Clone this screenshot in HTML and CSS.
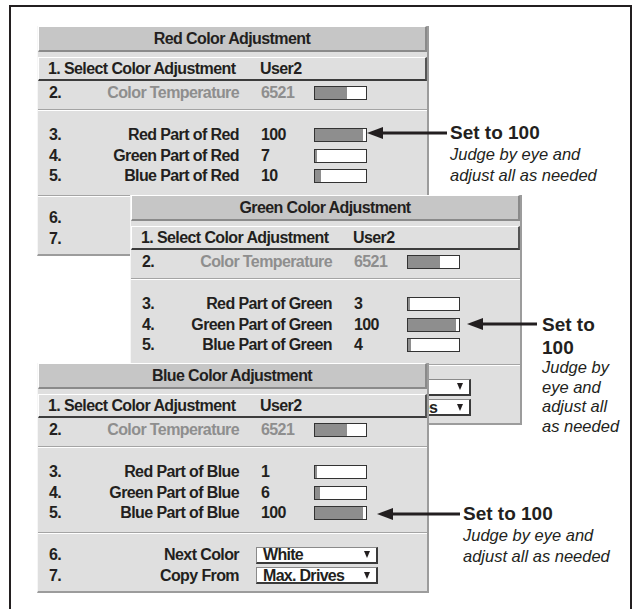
FILE: index.html
```html
<!DOCTYPE html>
<html lang="en">
<head>
  <meta charset="UTF-8">
  <title>Color Adjustment</title>
  <link rel="stylesheet" href="styles.css">
</head>
<body>

  <div class="figure">

    <section class="panel panel-red">
      <div class="panel-title">Red Color Adjustment</div>
      <div class="group group-top">
        <div class="row row-select"><span class="wide">1. Select Color Adjustment</span><span class="val">User2</span></div>
        <div class="row row-dim"><span class="num">2.</span><span class="label">Color Temperature</span><span class="val">6521</span><span class="bar"><span class="fill" style="width: 62%"></span></span></div>
      </div>
      <div class="group group-parts">
        <div class="row"><span class="num">3.</span><span class="label">Red Part of Red</span><span class="val">100</span><span class="bar"><span class="fill" style="width: 94%"></span></span></div>
        <div class="row"><span class="num">4.</span><span class="label">Green Part of Red</span><span class="val">7</span><span class="bar"><span class="fill" style="width: 4%"></span></span></div>
        <div class="row"><span class="num">5.</span><span class="label">Blue Part of Red</span><span class="val">10</span><span class="bar"><span class="fill" style="width: 12%"></span></span></div>
      </div>
      <div class="group group-actions">
        <div class="row"><span class="num">6.</span><span class="label">Next Color</span><span class="select">Green<i class="caret"></i></span></div>
        <div class="row"><span class="num">7.</span><span class="label">Copy From</span><span class="select">Max. Drives<i class="caret"></i></span></div>
      </div>
    </section>

    <section class="panel panel-green">
      <div class="panel-title">Green Color Adjustment</div>
      <div class="group group-top">
        <div class="row row-select"><span class="wide">1. Select Color Adjustment</span><span class="val">User2</span></div>
        <div class="row row-dim"><span class="num">2.</span><span class="label">Color Temperature</span><span class="val">6521</span><span class="bar"><span class="fill" style="width: 62%"></span></span></div>
      </div>
      <div class="group group-parts">
        <div class="row"><span class="num">3.</span><span class="label">Red Part of Green</span><span class="val">3</span><span class="bar"><span class="fill" style="width: 4%"></span></span></div>
        <div class="row"><span class="num">4.</span><span class="label">Green Part of Green</span><span class="val">100</span><span class="bar"><span class="fill" style="width: 94%"></span></span></div>
        <div class="row"><span class="num">5.</span><span class="label">Blue Part of Green</span><span class="val">4</span><span class="bar"><span class="fill" style="width: 5%"></span></span></div>
      </div>
      <div class="group group-actions">
        <div class="row"><span class="num">6.</span><span class="label">Next Color</span><span class="select">Blue<i class="caret"></i></span></div>
        <div class="row"><span class="num">7.</span><span class="label">Copy From</span><span class="select">Max. Drives<i class="caret"></i></span></div>
      </div>
    </section>

    <section class="panel panel-blue">
      <div class="panel-title">Blue Color Adjustment</div>
      <div class="group group-top">
        <div class="row row-select"><span class="wide">1. Select Color Adjustment</span><span class="val">User2</span></div>
        <div class="row row-dim"><span class="num">2.</span><span class="label">Color Temperature</span><span class="val">6521</span><span class="bar"><span class="fill" style="width: 62%"></span></span></div>
      </div>
      <div class="group group-parts">
        <div class="row"><span class="num">3.</span><span class="label">Red Part of Blue</span><span class="val">1</span><span class="bar"><span class="fill" style="width: 3%"></span></span></div>
        <div class="row"><span class="num">4.</span><span class="label">Green Part of Blue</span><span class="val">6</span><span class="bar"><span class="fill" style="width: 10%"></span></span></div>
        <div class="row"><span class="num">5.</span><span class="label">Blue Part of Blue</span><span class="val">100</span><span class="bar"><span class="fill" style="width: 94%"></span></span></div>
      </div>
      <div class="group group-actions">
        <div class="row"><span class="num">6.</span><span class="label">Next Color</span><span class="select">White<i class="caret"></i></span></div>
        <div class="row"><span class="num">7.</span><span class="label">Copy From</span><span class="select">Max. Drives<i class="caret"></i></span></div>
      </div>
    </section>

    <!-- callouts -->
    <div class="callout callout-red">
      <svg class="arrow" width="80" height="22" viewBox="0 0 80 22"><path d="M0 11 L16 5 L16 17 Z"/><rect x="15" y="9.5" width="65" height="3"/></svg>
      <div class="note"><b>Set to 100</b><i>Judge by eye and<br>adjust all as needed</i></div>
    </div>

    <div class="callout callout-green">
      <svg class="arrow" width="70" height="22" viewBox="0 0 70 22"><path d="M0 11 L16 5 L16 17 Z"/><rect x="15" y="9.5" width="55" height="3"/></svg>
      <div class="note note-narrow"><b>Set to 100</b><i>Judge by eye and adjust all as needed</i></div>
    </div>

    <div class="callout callout-blue">
      <svg class="arrow" width="83" height="22" viewBox="0 0 83 22"><path d="M0 11 L16 5 L16 17 Z"/><rect x="15" y="9.5" width="68" height="3"/></svg>
      <div class="note"><b>Set to 100</b><i>Judge by eye and<br>adjust all as needed</i></div>
    </div>

  </div>

</body>
</html>
```

FILE: styles.css
```css
body {
  margin: 0;
  background: #fff;
  color: #231f20;
  font-family: "Liberation Sans", Arial, sans-serif;
  overflow: hidden;
}

.figure {
  position: relative;
  margin: 5px 0 0 9px;
  width: 619px;
  height: 620px;
  border: 2px solid #231f20;
  border-bottom: none;
}

/* menu windows */
.panel {
  position: absolute;
  width: 392px;
  height: 230px;
  box-sizing: border-box;
  background: #dfdfdf;
  border-left: 1px solid #f6f6f6;
  border-right: 2px solid #9c9c9c;
  border-bottom: 2px solid #9c9c9c;
  font-size: 16px;
  font-weight: bold;
  letter-spacing: -0.6px;
  white-space: nowrap;
}

.panel-red { left: 26px; top: 19px; }
.panel-green { left: 119px; top: 188px; }
.panel-blue { left: 26px; top: 356px; }

.panel-title {
  height: 26px;
  box-sizing: border-box;
  background: #c6c6c6;
  border-top: 1px solid #fff;
  border-left: 1px solid #fff;
  border-right: 2px solid #8a8a8a;
  border-bottom: 2px solid #8a8a8a;
  text-align: center;
  line-height: 23px;
}

.group-top {
  height: 57px;
  padding-top: 5px;
  box-sizing: border-box;
}

.group-parts,
.group-actions {
  border-top: 1px solid #a4a4a4;
  box-shadow: inset 0 1px 0 #fff;
}

.group-parts {
  padding: 15px 0 8px;
}

.group-actions {
  padding-top: 12.5px;
}

.row {
  display: grid;
  grid-template-columns: 30px 160px 75px 53px;
  align-items: center;
  padding-left: 11px;
  height: 20.5px;
  line-height: 20px;
}

.group-top .row {
  height: 24px;
}

.row-select {
  box-sizing: border-box;
  padding-left: 9px;
  border-top: 1px solid #fff;
  border-left: 1px solid #fff;
  border-right: 2px solid #555;
  border-bottom: 2px solid #3c3c3c;
}

.row-select .wide {
  grid-column: 1 / 3;
}

.row-dim {
  color: #8e8e8e;
}

.row-dim .num {
  color: #231f20;
}

.label {
  text-align: right;
}

.val {
  padding-left: 22px;
}

.bar {
  display: flex;
  width: 53px;
  height: 14px;
  box-sizing: border-box;
  border: 1px solid #333;
  background: #fff;
}

.fill {
  height: 100%;
  background: #8e8e8e;
}

.select {
  grid-column: 3 / 5;
  display: flex;
  justify-content: space-between;
  align-items: center;
  width: 122px;
  height: 17px;
  margin-left: 17px;
  padding: 0 6px 0 6px;
  box-sizing: border-box;
  background: #fff;
  border: 1px solid #8a8a8a;
  border-right: 2px solid #3a3a3a;
  border-bottom: 2px solid #3a3a3a;
  line-height: 15px;
  letter-spacing: -0.7px;
}

.caret {
  border-left: 3.5px solid transparent;
  border-right: 3.5px solid transparent;
  border-top: 7px solid #231f20;
}

/* annotations */
.callout {
  position: absolute;
  display: flex;
  align-items: flex-start;
}

.callout-red { left: 356px; top: 115px; }
.callout-green { left: 456px; top: 306px; }
.callout-blue { left: 366px; top: 496px; }

.arrow {
  flex: none;
  fill: #231f20;
  margin-right: 3px;
}

.callout-green .arrow {
  margin-right: 5px;
}

.note b {
  display: block;
  font-size: 19px;
  line-height: 22px;
}

.note i {
  display: block;
  font-size: 16.5px;
  line-height: 21px;
}

.note-narrow {
  width: 80px;
}

.note-narrow b {
  line-height: 23px;
}

.note-narrow i {
  margin-top: -1px;
  line-height: 19.5px;
}
```
